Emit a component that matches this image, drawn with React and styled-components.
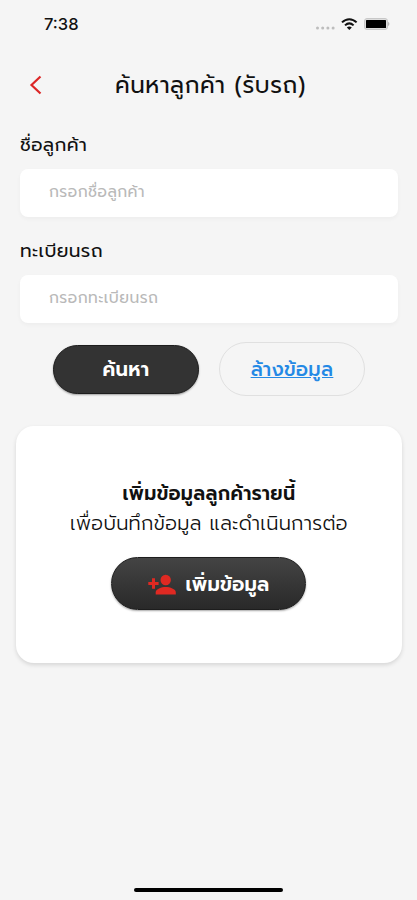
import styled, { createGlobalStyle } from "styled-components";

const GlobalStyle = createGlobalStyle`
  * {
    box-sizing: border-box;
  }

  body {
    margin: 0;
    background: #f5f5f5;
    font-family: "Prompt", "Kanit", "Noto Sans Thai", "Noto Sans", "Liberation Sans", sans-serif;
    color: #111111;
  }
`;

const Screen = styled.div`
  height: 900px;
  display: flex;
  flex-direction: column;
  overflow: hidden;
  background: #f5f5f5;
`;

const StatusBar = styled.div`
  height: 48px;
  padding: 0 26px 0 44px;
  display: flex;
  align-items: center;
  justify-content: space-between;
`;

const Clock = styled.span`
  font-family: Inter, "Liberation Sans", sans-serif;
  font-size: 16.5px;
  font-weight: 500;
  line-height: 20px;
`;

const StatusIcons = styled.div`
  display: flex;
  align-items: center;
`;

const Header = styled.header`
  height: 74px;
  padding: 0 28px;
  display: grid;
  grid-template-columns: 16px 1fr 16px;
  align-items: center;
`;

const BackButton = styled.button`
  padding: 0;
  border: none;
  background: transparent;
  display: flex;
`;

const Text = styled.span`
  display: inline-block;
  font-size: ${(props) => props.$size}px;
  font-weight: ${(props) => props.$weight || 400};
  letter-spacing: ${(props) => props.$spacing || 0}px;
  line-height: 30px;
  white-space: nowrap;
`;

const Title = styled.h1`
  margin: 2px 0 0 4px;
  font-size: 0;
  text-align: center;
`;

const Form = styled.form`
  padding: 8px 19px 0 20px;
`;

const Field = styled.label`
  display: flex;
  flex-direction: column;
  align-items: stretch;
  height: 106px;
`;

const Input = styled.input`
  width: 100%;
  height: 48px;
  margin-top: 9px;
  padding: 0 29px 2px;
  border: none;
  border-radius: 8px;
  background: #ffffff;
  box-shadow: 0 2px 4px rgba(0, 0, 0, 0.035);
  font-family: inherit;
  font-size: 15.5px;
  letter-spacing: 0.45px;

  &::placeholder {
    color: #b9b9b9;
    opacity: 1;
  }
`;

const Actions = styled.div`
  display: flex;
  align-items: center;
  justify-content: center;
  gap: 20px;
`;

const PillButton = styled.button`
  height: 49px;
  width: 146px;
  padding: 2px 0 0;
  border: 1px solid #1d1d1d;
  border-radius: 27px;
  background: #333333;
  box-shadow: 0 1px 2px rgba(0, 0, 0, 0.35);
  color: #ffffff;
  font-family: inherit;
  display: flex;
  align-items: center;
  justify-content: center;
`;

const ClearButton = styled(PillButton)`
  height: 54px;
  border-color: #e0e0e0;
  background: transparent;
  box-shadow: none;
  color: #2489e5;
  text-decoration: underline;
`;

const AddButton = styled(PillButton)`
  width: 195px;
  height: 53px;
  margin: 18px 1px 0 0;
  gap: 10px;
  background: linear-gradient(#444444, #292929);
`;

const Card = styled.section`
  margin: 30px 15px 0 16px;
  height: 237px;
  padding-top: 53px;
  border-radius: 18px;
  background: #ffffff;
  box-shadow: 0 2px 4px rgba(0, 0, 0, 0.13);
  display: flex;
  flex-direction: column;
  align-items: center;
`;

const HomeIndicator = styled.div`
  width: 149px;
  height: 4px;
  margin: auto auto 8px;
  border-radius: 2px;
  background: #000000;
`;

function SignalIcon() {
  return (
    <svg width="20" height="20" viewBox="0 0 20 20" fill="#bdbdbd">
      <circle cx="2.5" cy="14" r="1.5" />
      <circle cx="7.7" cy="14" r="1.5" />
      <circle cx="12.9" cy="14" r="1.5" />
      <circle cx="18.1" cy="14" r="1.5" />
    </svg>
  );
}

function WifiIcon() {
  return (
    <svg width="28" height="20" viewBox="0 0 28 20" fill="none" stroke="#111" strokeWidth="2">
      <path d="M7 8.4C11.3 4.1 17.3 4.1 21.6 8.4" />
      <path d="M10 11.4C12.7 8.8 15.9 8.8 18.6 11.4" />
      <path d="M14.3 16L11.8 13.4C13.3 12.1 15.3 12.1 16.8 13.4Z" fill="#111" stroke="none" />
    </svg>
  );
}

function BatteryIcon() {
  return (
    <svg width="28" height="20" viewBox="0 0 28 20">
      <rect x="1.5" y="4.5" width="23" height="11" rx="2.5" fill="#ddd" stroke="#c8c8c8" />
      <rect x="3" y="6" width="20" height="8" rx="0.5" fill="#000" />
      <path d="M25.2 7.8Q27.6 10 25.2 12.2Z" fill="#aaa" />
    </svg>
  );
}

function AddPersonIcon() {
  return (
    <svg width="28" height="22" viewBox="0 0 28 22" fill="#df2922">
      <path d="M4 4.3H7V8.1H10.6V11H7V14.8H4V11H0.3V8.1H4Z" />
      <circle cx="17.7" cy="6" r="5.2" />
      <path d="M7.7 20.5V18.4C7.7 15 13.5 13.1 17.7 13.1S27.8 15 27.8 18.4V20.5Z" />
    </svg>
  );
}

function App() {
  return (
    <>
      <GlobalStyle />
      <Screen>
        <StatusBar>
          <Clock>7:38</Clock>
          <StatusIcons>
            <SignalIcon />
            <WifiIcon />
            <BatteryIcon />
          </StatusIcons>
        </StatusBar>

        <Header>
          <BackButton type="button" aria-label="ย้อนกลับ">
            <svg width="16" height="20" viewBox="0 0 16 20" fill="none" stroke="#dc2626" strokeWidth="2.2">
              <path d="M12.5 1.5L3.5 10L12.5 18.5" />
            </svg>
          </BackButton>
          <Title>
            <Text $size={23} $spacing={0.55}>ค้นหาลูกค้า (รับรถ)</Text>
          </Title>
        </Header>

        <Form>
          <Field>
            <Text $size={18.5} $spacing={0.4}>ชื่อลูกค้า</Text>
            <Input placeholder="กรอกชื่อลูกค้า" />
          </Field>
          <Field>
            <Text $size={18.5} $spacing={0.4}>ทะเบียนรถ</Text>
            <Input placeholder="กรอกทะเบียนรถ" />
          </Field>
          <Actions>
            <PillButton type="button">
              <Text $size={19.5} $weight={600} $spacing={0.4}>ค้นหา</Text>
            </PillButton>
            <ClearButton type="button">
              <Text $size={19.5} $weight={500} $spacing={0.3}>ล้างข้อมูล</Text>
            </ClearButton>
          </Actions>
        </Form>

        <Card>
          <Text $size={19} $weight={600} $spacing={0.4}>เพิ่มข้อมูลลูกค้ารายนี้</Text>
          <Text $size={19.5} $weight={300} $spacing={0.35}>เพื่อบันทึกข้อมูล และดำเนินการต่อ</Text>
          <AddButton type="button">
            <AddPersonIcon />
            <Text $size={19.5} $weight={600} $spacing={0.2}>เพิ่มข้อมูล</Text>
          </AddButton>
        </Card>

        <HomeIndicator />
      </Screen>
    </>
  );
}

export default App;
